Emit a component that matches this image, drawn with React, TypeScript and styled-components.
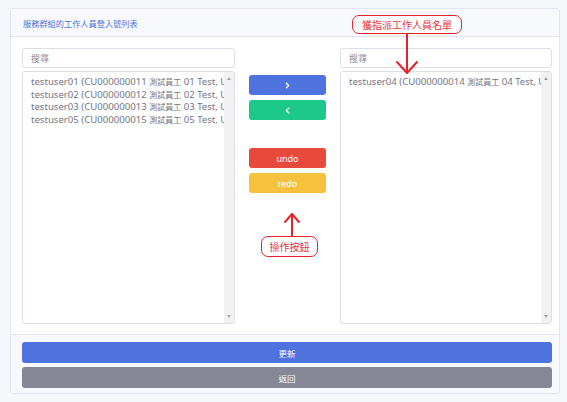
import React from "react"
import styled, { createGlobalStyle } from "styled-components"
import { ChevronRight, ChevronLeft } from "lucide-react"

const GlobalStyle = createGlobalStyle`
  html, body {
    margin: 0;
    padding: 0;
    background: #f6f7fa;
    font-family: "Noto Sans", "Noto Sans CJK TC", sans-serif;
  }
`

const Page = styled.div`
  position: relative;
  width: 567px;
  height: 402px;
  padding: 8px 7px 0 10px;
  box-sizing: border-box;
`

const Card = styled.section`
  width: 550px;
  background: #fff;
  border: 1px solid #e3e6f0;
  border-radius: 3px;
  box-sizing: border-box;
  overflow: hidden;
`

const CardHeader = styled.header`
  height: 27px;
  display: flex;
  align-items: center;
  padding-left: 12px;
  background: #f8f9fc;
  border-bottom: 1px solid #e3e6f0;
  color: #4e73df;
  font-size: 8.2px;
`

const CardBody = styled.div`
  display: grid;
  grid-template-columns: 213px 1fr 212px;
  padding: 11px 7px 10px 11px;
`

const Column = styled.div`
  display: flex;
  flex-direction: column;
  gap: 3px;
`

const SearchInput = styled.input`
  height: 20px;
  box-sizing: border-box;
  border: 1px solid #dcdee8;
  border-radius: 3px;
  padding: 0 8px;
  font-family: inherit;
  font-size: 9px;
  color: #6e707e;
  outline: none;
  &::placeholder {
    color: #8a8c99;
  }
`

const ListBox = styled.div`
  height: 253px;
  box-sizing: border-box;
  border: 1px solid #dcdee8;
  border-radius: 3px;
  display: flex;
  overflow: hidden;
`

const Items = styled.ul`
  flex: 1;
  min-width: 0;
  margin: 0;
  padding: 4px 0 0 8px;
  list-style: none;
  font-size: 9.6px;
  line-height: 12.5px;
  color: #74767f;
  li {
    white-space: nowrap;
    overflow: hidden;
  }
`

const Cjk = styled.span`
  font-size: 8px;
`

const Scrollbar = styled.div`
  width: 10px;
  background: #f1f1f1;
  display: flex;
  flex-direction: column;
  justify-content: space-between;
  align-items: center;
  padding: 5px 0;
  box-sizing: border-box;
`

const Arrow = styled.span<{ $down?: boolean }>`
  width: 0;
  height: 0;
  border-left: 2.5px solid transparent;
  border-right: 2.5px solid transparent;
  ${p =>
    p.$down
      ? "border-top: 3px solid #a3a3a3;"
      : "border-bottom: 3px solid #a3a3a3;"}
`

const Middle = styled.div`
  display: flex;
  flex-direction: column;
  align-items: center;
  padding-top: 27px;
`

const ButtonGroup = styled.div<{ $space?: number }>`
  display: flex;
  flex-direction: column;
  gap: 5px;
  margin-top: ${p => p.$space || 0}px;
`

const ActionButton = styled.button<{ $bg: string }>`
  width: 77px;
  height: 20px;
  border: none;
  border-radius: 3px;
  background: ${p => p.$bg};
  color: #fff;
  font-family: inherit;
  font-size: 9px;
  display: flex;
  align-items: center;
  justify-content: center;
  padding: 0;
`

const Footer = styled.footer`
  display: flex;
  flex-direction: column;
  gap: 4px;
  padding: 7px 7px 5px 11px;
  background: #f8f9fc;
  border-top: 1px solid #e3e6f0;
`

const FooterButton = styled.button<{ $bg: string }>`
  height: 21px;
  border: none;
  border-radius: 3px;
  background: ${p => p.$bg};
  color: #fff;
  font-family: inherit;
  font-size: 8.5px;
  padding: 0;
`

const Callout = styled.div<{ $x: number; $y: number; $w: number; $h: number }>`
  position: absolute;
  left: ${p => p.$x}px;
  top: ${p => p.$y}px;
  width: ${p => p.$w}px;
  height: ${p => p.$h}px;
  box-sizing: border-box;
  border: 1.5px solid #e3242b;
  border-radius: 7px;
  display: flex;
  align-items: center;
  justify-content: center;
  color: #e8343a;
  font-size: 10px;
  background: #fff;
`

const Overlay = styled.svg`
  position: absolute;
  left: 0;
  top: 0;
  pointer-events: none;
`

type User = { login: string; code: string; no: string }

const leftUsers: User[] = [
  { login: "testuser01", code: "CU000000011", no: "01" },
  { login: "testuser02", code: "CU000000012", no: "02" },
  { login: "testuser03", code: "CU000000013", no: "03" },
  { login: "testuser05", code: "CU000000015", no: "05" },
]

const rightUsers: User[] = [{ login: "testuser04", code: "CU000000014", no: "04" }]

const UserList = ({ users }: { users: User[] }) => (
  <Column>
    <SearchInput placeholder="搜尋" />
    <ListBox>
      <Items>
        {users.map(u => (
          <li key={u.login}>
            {u.login} ({u.code} <Cjk>測試員工</Cjk> {u.no} Test, User {u.no})
          </li>
        ))}
      </Items>
      <Scrollbar>
        <Arrow />
        <Arrow $down />
      </Scrollbar>
    </ListBox>
  </Column>
)

const App = () => {
  return (
    <Page>
      <GlobalStyle />
      <Card>
        <CardHeader>服務群組的工作人員登入號列表</CardHeader>
        <CardBody>
          <UserList users={leftUsers} />
          <Middle>
            <ButtonGroup>
              <ActionButton $bg="#4e73df">
                <ChevronRight size={9} strokeWidth={4} />
              </ActionButton>
              <ActionButton $bg="#1cc88a">
                <ChevronLeft size={9} strokeWidth={4} />
              </ActionButton>
            </ButtonGroup>
            <ButtonGroup $space={28}>
              <ActionButton $bg="#e74a3b">undo</ActionButton>
              <ActionButton $bg="#f6c23e">redo</ActionButton>
            </ButtonGroup>
          </Middle>
          <UserList users={rightUsers} />
        </CardBody>
        <Footer>
          <FooterButton $bg="#4e73df">更新</FooterButton>
          <FooterButton $bg="#858796">返回</FooterButton>
        </Footer>
      </Card>

      <Callout $x={352} $y={15} $w={110} $h={19}>
        獲指派工作人員名單
      </Callout>
      <Callout $x={261} $y={236} $w={57} $h={21}>
        操作按鈕
      </Callout>
      <Overlay width="567" height="402">
        <g stroke="#e3242b" strokeWidth="2" fill="none" strokeLinecap="round" strokeLinejoin="round">
          <path d="M407 34 L407 73" />
          <path d="M397 62 L407 73 L417 62" />
          <path d="M292 236 L292 214" />
          <path d="M285 222 L292 214 L299 222" />
        </g>
      </Overlay>
    </Page>
  )
}

export default App
